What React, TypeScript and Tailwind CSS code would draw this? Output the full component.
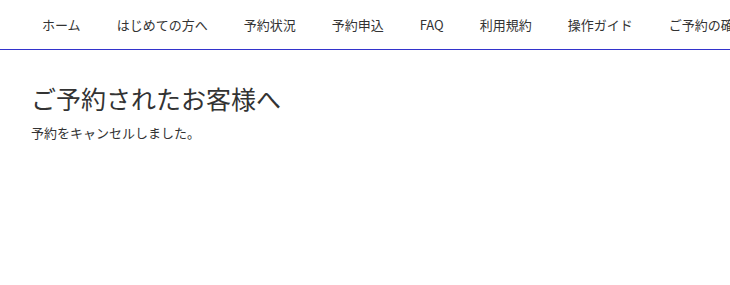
import React from "react";

const items = ["ホーム", "はじめての方へ", "予約状況", "予約申込", "FAQ", "利用規約", "操作ガイド", "ご予約の確認"];

export default function App() {
  return (
    <div
      className="w-[730px] h-[285px] overflow-hidden bg-white text-[#333333]"
      style={{ fontFamily: '"Noto Sans CJK JP", "Noto Sans", sans-serif' }}
    >
      <nav className="h-[50px] border-b border-[#3333cc] flex items-center pl-[24px] whitespace-nowrap">
        {items.map((t) => (
          <span key={t} className="px-[18px] text-[13px] leading-[20px] shrink-0">
            {t}
          </span>
        ))}
      </nav>
      <main className="pl-[31px] pt-[30px]">
        <h1 className="text-[25px] leading-[37px] font-normal">ご予約されたお客様へ</h1>
        <p className="mt-[6px] text-[13px] leading-[20px]">予約をキャンセルしました。</p>
      </main>
    </div>
  );
}
